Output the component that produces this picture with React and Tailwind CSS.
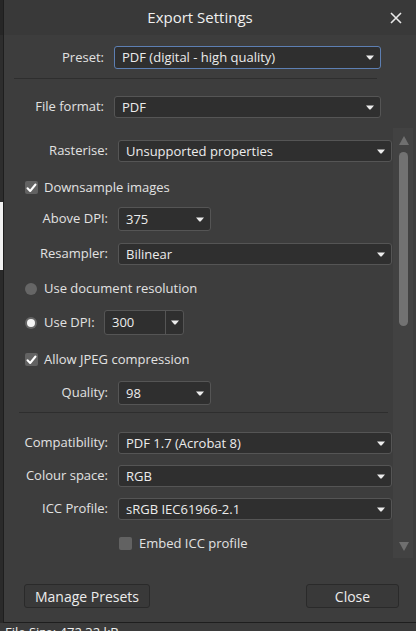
const Arrow = () => (
  <svg width="8" height="5" viewBox="0 0 8 5" className="shrink-0">
    <path d="M0 0.5 H8 L4.6 4.5 H3.4 Z" fill="#ececec" />
  </svg>
);

function Select({ value, className, focused }) {
  return (
    <div
      className={
        "flex items-center justify-between rounded-[3px] border pl-[7px] pr-[6px] bg-[#2f2f2f] " +
        (focused ? "border-[#5d7fb3] " : "border-[#555555] ") +
        className
      }
    >
      <span className="leading-none text-[#ececec]">{value}</span>
      <Arrow />
    </div>
  );
}

function Check({ checked }) {
  return (
    <div className="w-[13px] h-[13px] rounded-[2px] bg-[#626262] flex items-center justify-center shrink-0">
      {checked && (
        <svg width="11" height="10" viewBox="0 0 11 10">
          <path d="M1.5 5.2 L4.2 8 L9.5 1.5" stroke="#ffffff" strokeWidth="2" fill="none" strokeLinecap="round" strokeLinejoin="round" />
        </svg>
      )}
    </div>
  );
}

function Radio({ on }) {
  return (
    <div className="w-[12px] h-[12px] rounded-full bg-[#666666] flex items-center justify-center shrink-0">
      {on && <div className="w-[8px] h-[8px] rounded-full bg-[#f4f4f4]" />}
    </div>
  );
}

export default function App() {
  return (
    <div className="w-[416px] h-[631px] overflow-hidden bg-[#3b3b3b] text-[#e2e2e2] text-[13px] flex flex-col font-['Open_Sans','Noto_Sans',sans-serif]">
      <div className="flex h-[623px] shrink-0">
        {/* background app strip */}
        <div className="w-[3px] flex flex-col bg-[#2d2d2d]">
          <div className="h-[35px] bg-[#262626]" />
          <div className="h-[167px]" />
          <div className="h-[68px] bg-[#f2f2f2]" />
          <div className="flex-1 bg-[#2a2a2a]" />
        </div>
        {/* dialog */}
        <div className="flex-1 flex flex-col border-l border-b border-[#1e1e1e] bg-[#3d3d3d]">
          <div className="h-[35px] shrink-0 flex items-center bg-[#393939]">
            <div className="flex-1 text-center pl-[20px] text-[15px] text-[#f0f0f0]">Export Settings</div>
            <div className="w-[40px] flex justify-center">
              <svg width="12" height="12" viewBox="0 0 12 12">
                <path d="M1 1 L11 11 M11 1 L1 11" stroke="#e8e8e8" strokeWidth="1.6" />
              </svg>
            </div>
          </div>

          <div className="mt-[11px] flex items-center h-[23px]">
            <div className="w-[100px] text-right">Preset:</div>
            <Select value="PDF (digital - high quality)" focused className="ml-[10px] w-[267px] h-[23px]" />
          </div>
          <div className="mt-[9px] ml-[10px] w-[363px] h-px bg-[#2e2e2e]" />

          <div className="mt-[17px] flex items-center h-[22px]">
            <div className="w-[100px] text-right">File format:</div>
            <Select value="PDF" className="ml-[10px] w-[267px] h-[22px]" />
          </div>

          <div className="mt-[10px] flex h-[430px] shrink-0">
            <div className="w-[389px] pt-[12px] flex flex-col">
              <div className="flex items-center h-[22px]">
                <div className="w-[104px] text-right">Rasterise:</div>
                <Select value="Unsupported properties" className="ml-[10px] w-[274px] h-[22px]" />
              </div>

              <div className="mt-[19px] flex items-center h-[13px] pl-[21px]">
                <Check checked />
                <span className="ml-[6px]">Downsample images</span>
              </div>

              <div className="mt-[13px] flex items-center h-[24px]">
                <div className="w-[104px] text-right">Above DPI:</div>
                <Select value="375" className="ml-[10px] w-[93px] h-[24px]" />
              </div>

              <div className="mt-[12px] flex items-center h-[22px]">
                <div className="w-[104px] text-right">Resampler:</div>
                <Select value="Bilinear" className="ml-[10px] w-[274px] h-[22px]" />
              </div>

              <div className="mt-[18px] flex items-center h-[12px] pl-[21px]">
                <Radio />
                <span className="ml-[7px]">Use document resolution</span>
              </div>

              <div className="mt-[15px] flex items-center h-[25px] pl-[21px]">
                <Radio on />
                <span className="ml-[7px] w-[60px]">Use DPI:</span>
                <div className="w-[80px] h-[25px] flex rounded-[3px] border border-[#555555] bg-[#2f2f2f]">
                  <div className="w-[61px] flex items-center pl-[7px] border-r border-[#555555] text-[#ececec]">300</div>
                  <div className="flex-1 flex items-center justify-center">
                    <Arrow />
                  </div>
                </div>
              </div>

              <div className="mt-[18px] flex items-center h-[13px] pl-[21px]">
                <Check checked />
                <span className="ml-[6px]">Allow JPEG compression</span>
              </div>

              <div className="mt-[15px] flex items-center h-[24px]">
                <div className="w-[104px] text-right">Quality:</div>
                <Select value="98" className="ml-[10px] w-[93px] h-[24px]" />
              </div>

              <div className="mt-[7px] ml-[15px] w-[369px] h-px bg-[#2e2e2e]" />

              <div className="mt-[19px] flex items-center h-[22px]">
                <div className="w-[104px] text-right">Compatibility:</div>
                <Select value="PDF 1.7 (Acrobat 8)" className="ml-[10px] w-[274px] h-[22px]" />
              </div>
              <div className="mt-[11px] flex items-center h-[22px]">
                <div className="w-[104px] text-right">Colour space:</div>
                <Select value="RGB" className="ml-[10px] w-[274px] h-[22px]" />
              </div>
              <div className="mt-[11px] flex items-center h-[22px]">
                <div className="w-[104px] text-right">ICC Profile:</div>
                <Select value="sRGB IEC61966-2.1" className="ml-[10px] w-[274px] h-[22px]" />
              </div>

              <div className="mt-[17px] flex items-center h-[13px] pl-[115px]">
                <Check />
                <span className="ml-[7px]">Embed ICC profile</span>
              </div>
            </div>

            {/* scrollbar */}
            <div className="w-[20px] bg-[#424242] flex flex-col items-center pt-[8px]">
              <svg width="10" height="9" viewBox="0 0 10 9" className="ml-[1px]">
                <path d="M5 0 L10 9 H0 Z" fill="#6f6f6f" />
              </svg>
              <div className="mt-[7px] ml-[1px] w-[9px] h-[174px] rounded-full bg-[#727272]" />
              <div className="flex-1" />
              <svg width="10" height="9" viewBox="0 0 10 9" className="ml-[1px] mb-[7px]">
                <path d="M0 0 H10 L5 9 Z" fill="#6f6f6f" />
              </svg>
            </div>
          </div>

          <div className="mt-[26px] flex items-center h-[24px]">
            <div className="ml-[20px] w-[126px] h-[24px] rounded-[3px] border border-[#2a2a2a] bg-[#393939] flex items-center justify-center text-[14px] text-[#ececec]">
              Manage Presets
            </div>
            <div className="ml-[156px] w-[93px] h-[24px] rounded-[3px] border border-[#2a2a2a] bg-[#393939] flex items-center justify-center text-[14px] text-[#ececec]">
              Close
            </div>
          </div>
        </div>
      </div>
      <div className="pl-[5px] pt-[1px] text-[13px] leading-[16px] text-[#f0f0f0]">File Size: 472.32 kB</div>
    </div>
  );
}
